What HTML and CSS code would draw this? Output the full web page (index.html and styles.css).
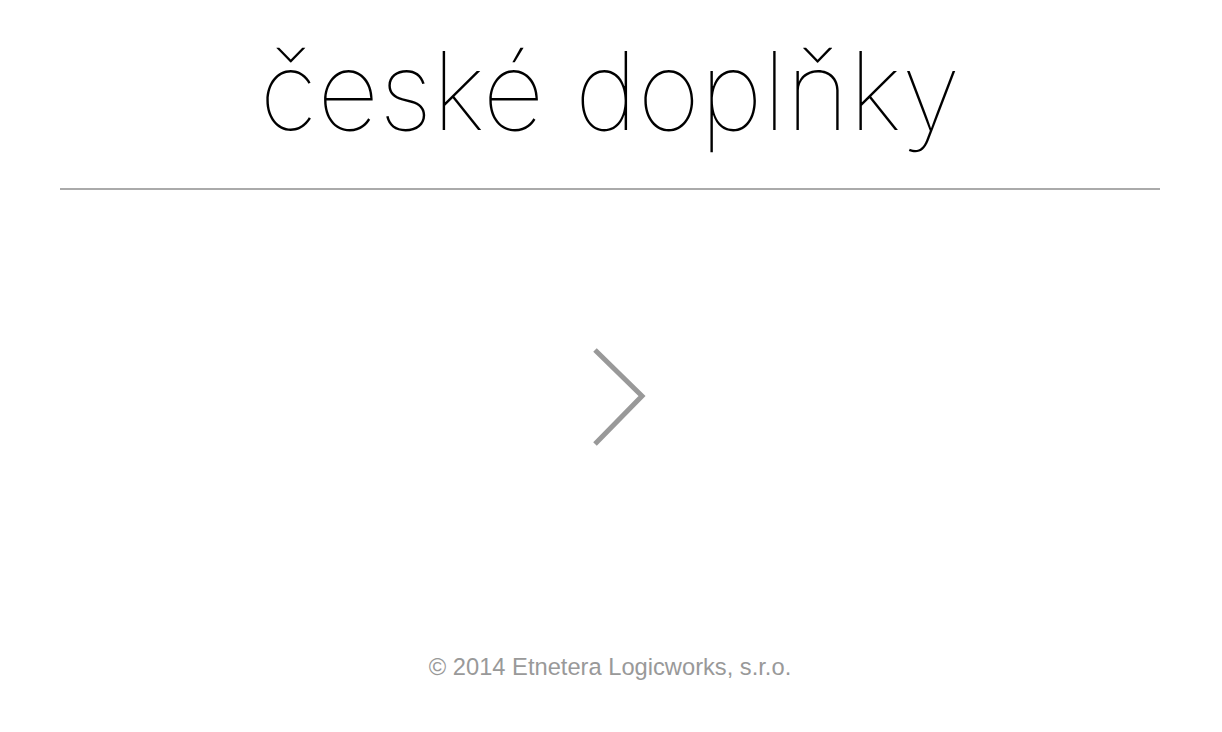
FILE: index.html
```html
<!DOCTYPE html>
<html lang="cs">
<head>
<meta charset="utf-8">
<title>české doplňky</title>
<link rel="stylesheet" href="styles.css">
</head>
<body>
<div class="page">
  <header class="header">
    <h1 class="title">české doplňky</h1>
  </header>
  <main class="main">
    <a class="next" href="#" aria-label="Další">
      <svg width="60" height="104" viewBox="0 0 60 104">
        <polyline points="5,5 52,51 5,99" fill="none" stroke="#999" stroke-width="5"/>
      </svg>
    </a>
  </main>
  <footer class="footer">© 2014 Etnetera Logicworks, s.r.o.</footer>
</div>
</body>
</html>
```
FILE: styles.css
```css
html, body {
  margin: 0;
  padding: 0;
  background: #fff;
}
.page {
  width: 1100px;
  margin: 0 0 0 60px;
  height: 732px;
  display: flex;
  flex-direction: column;
}
.header {
  border-bottom: 2px solid #aaa;
  height: 190px;
  box-sizing: border-box;
  display: flex;
  justify-content: center;
}
.title {
  margin: 0;
  padding-top: 24px;
  font-family: Inter, "Liberation Sans", sans-serif;
  font-weight: 100;
  font-size: 108px;
  line-height: 134px;
  color: #000;
  letter-spacing: 0;
}
.main {
  flex: 1;
  display: flex;
  justify-content: flex-start;
  align-items: flex-start;
  padding-top: 155px;
}
.next {
  display: block;
  margin-left: 530px;
}
.footer {
  text-align: center;
  font-family: "Liberation Sans", Arial, sans-serif;
  font-size: 23.7px;
  color: #999;
  padding-bottom: 51px;
}
```
